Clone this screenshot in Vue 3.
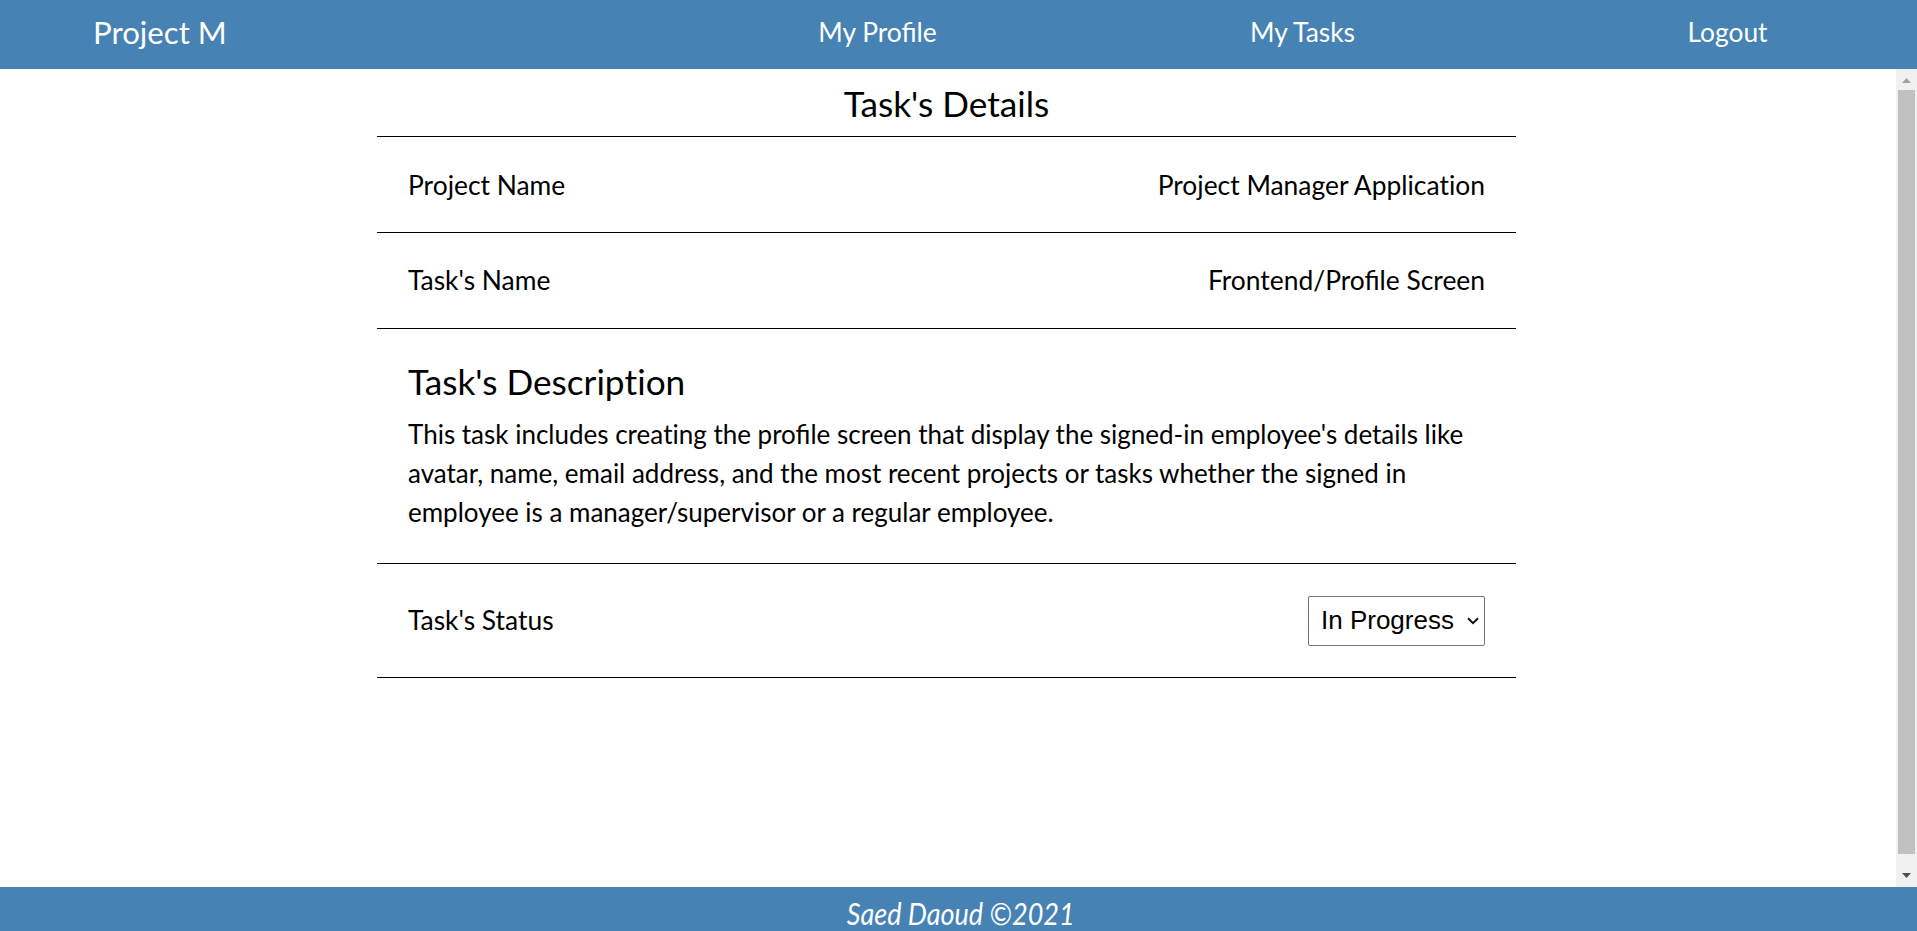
<script setup>
import { ref, h } from 'vue'

// Keeps the "fi" ligature but renders every "ti" pair as separate letters.
const Copy = ({ text }) =>
  h('span', text.split(/(ti)/).map((part) =>
    part === 'ti' ? h('span', { style: { fontVariantLigatures: 'none' } }, part) : part
  ))
Copy.props = ['text']

const links = ['My Profile', 'My Tasks', 'Logout']
const rows = [
  { label: 'Project Name', value: 'Project Manager Application' },
  { label: "Task's Name", value: 'Frontend/Profile Screen' },
]
const description = [
  "This task includes creating the profile screen that display the signed-in employee's details like",
  'avatar, name, email address, and the most recent projects or tasks whether the signed in',
  'employee is a manager/supervisor or a regular employee.',
]
const status = ref('In Progress')
</script>

<template>
  <div class="app">
    <header class="header">
      <a class="brand">Project M</a>
      <nav class="nav">
        <a v-for="link in links" :key="link" class="link">{{ link }}</a>
      </nav>
    </header>
    <div class="body">
      <main class="main">
        <section class="task">
          <h1 class="title">Task's Details</h1>
          <div v-for="row in rows" :key="row.label" class="row">
            <span>{{ row.label }}</span>
            <Copy :text="row.value" />
          </div>
          <div class="description">
            <h2 class="subtitle"><Copy text="Task's Description" /></h2>
            <p class="text"><Copy v-for="line in description" :key="line" class="line" :text="line" /></p>
          </div>
          <div class="row status">
            <span>Task's Status</span>
            <div class="select">
              <span>{{ status }}</span>
              <svg class="chevron" width="12" height="8" viewBox="0 0 12 8"><path d="M1 1.2 6 6.2 11 1.2" fill="none" stroke="#111" stroke-width="2" /></svg>
            </div>
          </div>
        </section>
      </main>
      <div class="scrollbar">
        <svg class="arrow" width="9" height="5" viewBox="0 0 9 5"><path d="M0 5 4.5 0 9 5z" fill="#a3a3a3" /></svg>
        <div class="thumb"></div>
        <svg class="arrow" width="9" height="5" viewBox="0 0 9 5"><path d="M0 0 4.5 5 9 0z" fill="#505050" /></svg>
      </div>
    </div>
    <footer class="footer"><span class="credit">Saed Daoud ©2021</span></footer>
  </div>
</template>

<style>
body {
  overflow: hidden;
}
</style>

<style scoped>
.app {
  display: flex;
  flex-direction: column;
  height: 931px;
  overflow: hidden;
  background: #fff;
  color: #000;
  font-family: Lato, sans-serif;
  font-size: 26px;
  line-height: 31px;
}
.header {
  display: flex;
  flex: none;
  height: 69px;
  background: #4682b4;
  color: #fff;
}
.brand {
  flex: none;
  box-sizing: border-box;
  width: 665px;
  padding: 14px 0 0 93px;
  font-size: 31.2px;
  line-height: 36px;
}
.nav {
  display: grid;
  flex: none;
  grid-template-columns: repeat(3, 425px);
  padding-top: 17px;
  font-size: 26.4px;
  text-align: center;
}
.body {
  display: flex;
  flex: 1;
  min-height: 0;
}
.main {
  flex: 1;
}
.task {
  width: 1139px;
  margin-left: 377px;
}
.title {
  box-sizing: border-box;
  height: 68px;
  margin: 0;
  padding-top: 13px;
  border-bottom: 1px solid #000;
  font-size: 35.2px;
  font-weight: 400;
  line-height: 42px;
  text-align: center;
}
.row {
  display: flex;
  align-items: center;
  justify-content: space-between;
  box-sizing: border-box;
  height: 96px;
  padding: 0 31px;
  border-bottom: 1px solid #000;
  font-size: 26.4px;
}
.title + .row {
  padding-top: 2px;
}
.description {
  box-sizing: border-box;
  height: 235px;
  padding: 31px 31px 0;
  border-bottom: 1px solid #000;
}
.subtitle {
  margin: 0 0 13px;
  font-size: 35.2px;
  font-weight: 400;
  line-height: 42px;
}
.text {
  margin: 0;
  line-height: 39px;
}
.line {
  display: block;
  white-space: nowrap;
}
.row.status {
  height: 114px;
}
.select {
  display: flex;
  align-items: center;
  justify-content: space-between;
  box-sizing: border-box;
  width: 177px;
  height: 50px;
  padding: 0 5px 0 12px;
  border: 1px solid #767676;
  border-radius: 2px;
  font-family: "Liberation Sans", Arial, sans-serif;
  font-size: 26px;
}
.scrollbar {
  display: flex;
  flex-direction: column;
  align-items: center;
  justify-content: space-between;
  box-sizing: border-box;
  width: 21px;
  padding: 9px 0 9px;
  background: #f1f1f1;
}
.thumb {
  width: 17px;
  height: 764px;
  margin: 7px 0 19px;
  background: #c1c1c1;
}
.arrow {
  flex: none;
}
.footer {
  display: flex;
  flex: none;
  justify-content: center;
  height: 44px;
  padding-left: 4px;
  background: #4682b4;
  color: #fff;
}
.credit {
  font-size: 31px;
  font-style: italic;
  line-height: 53px;
  white-space: nowrap;
  transform: scaleX(0.872);
}
</style>
